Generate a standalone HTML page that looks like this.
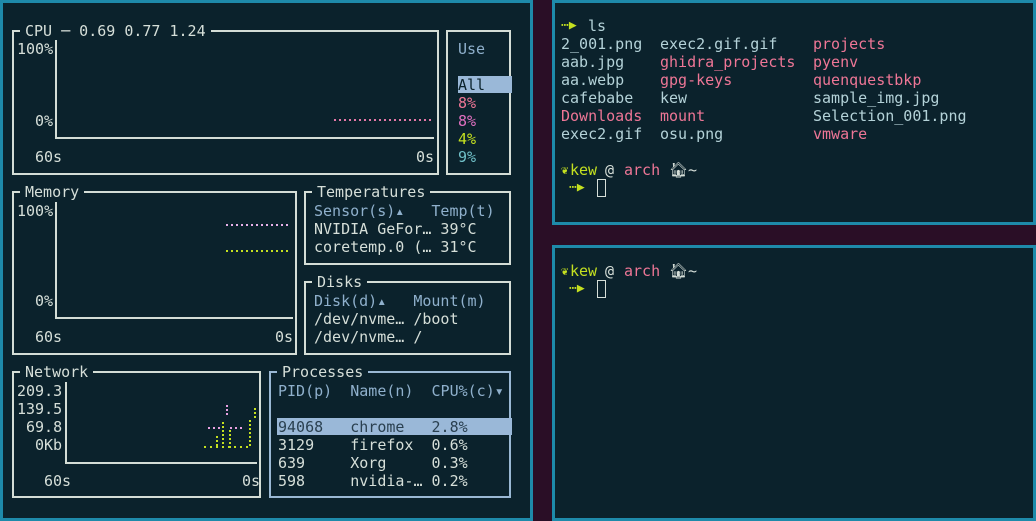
<!DOCTYPE html>
<html><head><meta charset="utf-8"><style>
*{margin:0;padding:0;box-sizing:border-box}
body{width:1036px;height:521px;background:#2a0e26;position:relative;overflow:hidden;font-family:"DejaVu Sans Mono","Liberation Mono",monospace;font-size:15px;color:#d6dfd9}
.p{position:absolute;background:#0b222c;border:3px solid #1e8aaa}
.t{position:absolute;white-space:pre;line-height:18px;height:18px}
.b{position:absolute;border:2px solid #d4ddd6}
.bl{border-color:#9ab8d4}
.ti{position:absolute;top:-10px;left:6px;background:#0b222c;padding:0 5px;white-space:pre;line-height:18px}
.h{color:#8fb0cc}
.pk{color:#ee7696}
.gn{color:#c4e020}
.tm{color:#b4d2d8}
.vl{position:absolute;width:2px;background:#d4ddd6}
.hl{position:absolute;height:2px;background:#d4ddd6}
.dot{position:absolute;height:2px}
.vd{position:absolute;width:2px}
</style></head><body>
<div class="p" style="left:0;top:0;width:533px;height:521px"></div>
<div class="p" style="left:552px;top:0;width:484px;height:225px"></div>
<div class="p" style="left:552px;top:245px;width:484px;height:276px"></div>

<!-- CPU -->
<div class="b" style="left:12px;top:30px;width:427px;height:145px"><div class="ti">CPU ─ 0.69 0.77 1.24</div></div>
<div class="vl" style="left:55px;top:40px;height:99px"></div>
<div class="hl" style="left:55px;top:137px;width:379px"></div>
<div class="t" style="left:17px;top:40px">100%</div>
<div class="t" style="left:35px;top:112px">0%</div>
<div class="t" style="left:35px;top:148px">60s</div>
<div class="t" style="left:416px;top:148px">0s</div>
<div class="dot" style="left:334px;top:119px;width:100px;background:repeating-linear-gradient(90deg,#e878a8 0 2px,transparent 2px 5px)"></div>
<div class="b" style="left:446px;top:30px;width:65px;height:145px"></div>
<div class="t h" style="left:458px;top:40px">Use</div>
<div style="position:absolute;left:458px;top:76px;width:54px;height:17px;background:#9ab8d8"></div>
<div class="t" style="left:458px;top:76px;color:#0b222c">All</div>
<div class="t pk" style="left:458px;top:94px">8%</div>
<div class="t" style="left:458px;top:112px;color:#e070c0">8%</div>
<div class="t gn" style="left:458px;top:130px">4%</div>
<div class="t" style="left:458px;top:148px;color:#70c0c8">9%</div>

<!-- Memory -->
<div class="b" style="left:12px;top:191px;width:285px;height:164px"><div class="ti">Memory</div></div>
<div class="vl" style="left:55px;top:202px;height:117px"></div>
<div class="hl" style="left:55px;top:317px;width:238px"></div>
<div class="t" style="left:17px;top:202px">100%</div>
<div class="t" style="left:35px;top:292px">0%</div>
<div class="t" style="left:35px;top:328px">60s</div>
<div class="t" style="left:275px;top:328px">0s</div>
<div class="dot" style="left:226px;top:224px;width:65px;background:repeating-linear-gradient(90deg,#e8b0e8 0 2px,transparent 2px 5px)"></div>
<div class="dot" style="left:226px;top:250px;width:65px;background:repeating-linear-gradient(90deg,#c4e020 0 2px,transparent 2px 5px)"></div>

<!-- Temperatures -->
<div class="b" style="left:304px;top:191px;width:207px;height:74px"><div class="ti">Temperatures</div></div>
<div class="t h" style="left:314px;top:202px">Sensor(s)▴   Temp(t)</div>
<div class="t" style="left:314px;top:220px">NVIDIA GeFor… 39°C</div>
<div class="t" style="left:314px;top:238px">coretemp.0 (… 31°C</div>

<!-- Disks -->
<div class="b" style="left:304px;top:281px;width:207px;height:74px"><div class="ti">Disks</div></div>
<div class="t h" style="left:314px;top:292px">Disk(d)▴   Mount(m)</div>
<div class="t" style="left:314px;top:310px">/dev/nvme… /boot</div>
<div class="t" style="left:314px;top:328px">/dev/nvme… /</div>

<!-- Network -->
<div class="b" style="left:12px;top:371px;width:249px;height:127px"><div class="ti">Network</div></div>
<div class="vl" style="left:65px;top:382px;height:82px"></div>
<div class="hl" style="left:65px;top:462px;width:192px"></div>
<div class="t" style="left:17px;top:382px">209.3</div>
<div class="t" style="left:17px;top:400px">139.5</div>
<div class="t" style="left:26px;top:418px">69.8</div>
<div class="t" style="left:35px;top:436px">0Kb</div>
<div class="t" style="left:44px;top:472px">60s</div>
<div class="t" style="left:242px;top:472px">0s</div>
<div class="vd" style="left:226px;top:405px;height:10px;background:repeating-linear-gradient(180deg,#e8a0e0 0 2px,transparent 2px 4px)"></div>
<div class="dot" style="left:208px;top:427px;width:12px;background:repeating-linear-gradient(90deg,#e8a0e0 0 2px,transparent 2px 5px)"></div>
<div class="dot" style="left:230px;top:427px;width:14px;background:repeating-linear-gradient(90deg,#e8a0e0 0 2px,transparent 2px 5px)"></div>
<div class="vd" style="left:222px;top:422px;height:26px;background:repeating-linear-gradient(180deg,#c4e020 0 2px,transparent 2px 4px)"></div>
<div class="vd" style="left:216px;top:436px;height:12px;background:repeating-linear-gradient(180deg,#c4e020 0 2px,transparent 2px 4px)"></div>
<div class="vd" style="left:229px;top:430px;height:18px;background:repeating-linear-gradient(180deg,#c4e020 0 2px,transparent 2px 4px)"></div>
<div class="vd" style="left:249px;top:420px;height:28px;background:repeating-linear-gradient(180deg,#c4e020 0 2px,transparent 2px 4px)"></div>
<div class="vd" style="left:254px;top:408px;height:12px;background:repeating-linear-gradient(180deg,#c4e020 0 2px,transparent 2px 4px)"></div>
<div class="dot" style="left:204px;top:446px;width:46px;background:repeating-linear-gradient(90deg,#c4e020 0 2px,transparent 2px 6px)"></div>

<!-- Processes -->
<div class="b bl" style="left:269px;top:371px;width:242px;height:127px"><div class="ti">Processes</div></div>
<div class="t h" style="left:278px;top:382px">PID(p)  Name(n)  CPU%(c)▾</div>
<div style="position:absolute;left:277px;top:418px;width:235px;height:17px;background:#9ab8d8"></div>
<div class="t" style="left:278px;top:418px;color:#2a4050">94068   chrome   2.8%</div>
<div class="t" style="left:278px;top:436px">3129    firefox  0.6%</div>
<div class="t" style="left:278px;top:454px">639     Xorg     0.3%</div>
<div class="t" style="left:278px;top:472px">598     nvidia-… 0.2%</div>

<!-- Terminal top -->
<div class="t gn" style="left:561px;top:17px;font-size:13px">⋯▶</div>
<div class="t tm" style="left:588px;top:17px">ls</div>
<div class="t tm" style="left:561px;top:35px">2_001.png</div>
<div class="t tm" style="left:561px;top:53px">aab.jpg</div>
<div class="t tm" style="left:561px;top:71px">aa.webp</div>
<div class="t tm" style="left:561px;top:89px">cafebabe</div>
<div class="t pk" style="left:561px;top:107px">Downloads</div>
<div class="t tm" style="left:561px;top:125px">exec2.gif</div>
<div class="t tm" style="left:660px;top:35px">exec2.gif.gif</div>
<div class="t pk" style="left:660px;top:53px">ghidra_projects</div>
<div class="t pk" style="left:660px;top:71px">gpg-keys</div>
<div class="t tm" style="left:660px;top:89px">kew</div>
<div class="t pk" style="left:660px;top:107px">mount</div>
<div class="t tm" style="left:660px;top:125px">osu.png</div>
<div class="t pk" style="left:813px;top:35px">projects</div>
<div class="t pk" style="left:813px;top:53px">pyenv</div>
<div class="t pk" style="left:813px;top:71px">quenquestbkp</div>
<div class="t tm" style="left:813px;top:89px">sample_img.jpg</div>
<div class="t tm" style="left:813px;top:107px">Selection_001.png</div>
<div class="t pk" style="left:813px;top:125px">vmware</div>

<div class="t gn" style="left:561px;top:161px;font-size:12px">❦</div>
<div class="t gn" style="left:570px;top:161px">kew</div>
<div class="t" style="left:605px;top:161px">@</div>
<div class="t pk" style="left:624px;top:161px">arch</div>
<div class="t" style="left:669px;top:161px">🏠︎~</div>
<div class="t gn" style="left:569px;top:179px;font-size:13px">⋯▶</div>
<div style="position:absolute;left:597px;top:179px;width:9px;height:18px;border:1px solid #d6dfd9"></div>

<!-- Terminal bottom -->
<div class="t gn" style="left:561px;top:262px;font-size:12px">❦</div>
<div class="t gn" style="left:570px;top:262px">kew</div>
<div class="t" style="left:605px;top:262px">@</div>
<div class="t pk" style="left:624px;top:262px">arch</div>
<div class="t" style="left:669px;top:262px">🏠︎~</div>
<div class="t gn" style="left:569px;top:280px;font-size:13px">⋯▶</div>
<div style="position:absolute;left:597px;top:280px;width:9px;height:18px;border:1px solid #d6dfd9"></div>
</body></html>
